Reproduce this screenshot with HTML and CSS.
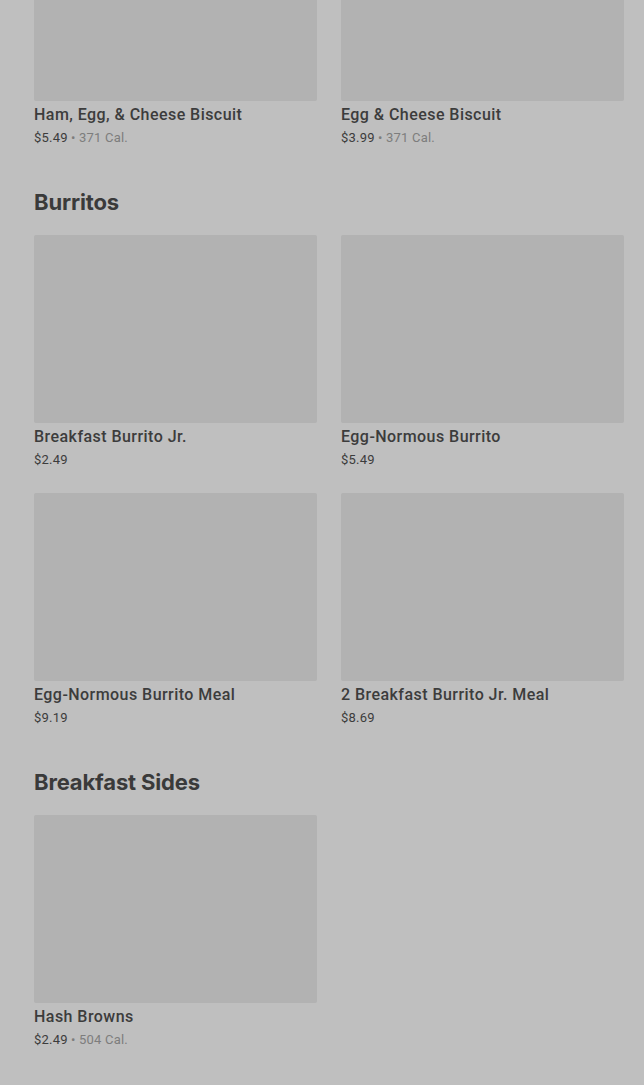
FILE: index.html
```html
<!DOCTYPE html>
<html>
<head>
<meta charset="utf-8">
<link rel="stylesheet" href="styles.css">
</head>
<body>
<main class="menu">
  <section class="section first">
    <div class="grid">
      <div class="card">
        <div class="img"></div>
        <div class="title">Ham, Egg, &amp; Cheese Biscuit</div>
        <div class="meta"><span class="price">$5.49</span><span class="dot"> • </span><span class="cal">371 Cal.</span></div>
      </div>
      <div class="card">
        <div class="img"></div>
        <div class="title">Egg &amp; Cheese Biscuit</div>
        <div class="meta"><span class="price">$3.99</span><span class="dot"> • </span><span class="cal">371 Cal.</span></div>
      </div>
    </div>
  </section>
  <section class="section">
    <h2 class="heading">Burritos</h2>
    <div class="grid">
      <div class="card">
        <div class="img"></div>
        <div class="title">Breakfast Burrito Jr.</div>
        <div class="meta"><span class="price">$2.49</span></div>
      </div>
      <div class="card">
        <div class="img"></div>
        <div class="title">Egg-Normous Burrito</div>
        <div class="meta"><span class="price">$5.49</span></div>
      </div>
      <div class="card">
        <div class="img"></div>
        <div class="title">Egg-Normous Burrito Meal</div>
        <div class="meta"><span class="price">$9.19</span></div>
      </div>
      <div class="card">
        <div class="img"></div>
        <div class="title">2 Breakfast Burrito Jr. Meal</div>
        <div class="meta"><span class="price">$8.69</span></div>
      </div>
    </div>
  </section>
  <section class="section">
    <h2 class="heading">Breakfast Sides</h2>
    <div class="grid">
      <div class="card">
        <div class="img"></div>
        <div class="title">Hash Browns</div>
        <div class="meta"><span class="price">$2.49</span><span class="dot"> • </span><span class="cal">504 Cal.</span></div>
      </div>
    </div>
  </section>
</main>
</body>
</html>
```
FILE: styles.css
```css
html, body {
  margin: 0;
  padding: 0;
  background: #bfbfbf;
}
body {
  font-family: Roboto, "Liberation Sans", sans-serif;
  color: #3b3b3b;
  overflow: hidden;
  height: 1085px;
}
.menu {
  padding: 0 20px 0 34px;
}
.section {
  margin-top: 41px;
}
.section.first {
  margin-top: -87px;
}
.heading {
  margin: 0 0 19px 0;
  font-family: Inter, "Liberation Sans", sans-serif;
  font-size: 22px;
  line-height: 28px;
  font-weight: 700;
  letter-spacing: -0.15px;
  color: #3a3a3a;
}
.grid {
  display: grid;
  grid-template-columns: 283px 283px;
  column-gap: 24px;
  row-gap: 24px;
}
.img {
  height: 188px;
  background: #b2b2b2;
  border-radius: 2px;
}
.title {
  margin-top: 4px;
  font-size: 16px;
  line-height: 20px;
  font-weight: 500;
  letter-spacing: 0.45px;
  color: #3c3c3c;
}
.meta {
  margin-top: 4px;
  font-size: 13px;
  line-height: 18px;
  letter-spacing: 0.2px;
  color: #3c3c3c;
}
.dot, .cal {
  color: #7d7d7d;
}
```
